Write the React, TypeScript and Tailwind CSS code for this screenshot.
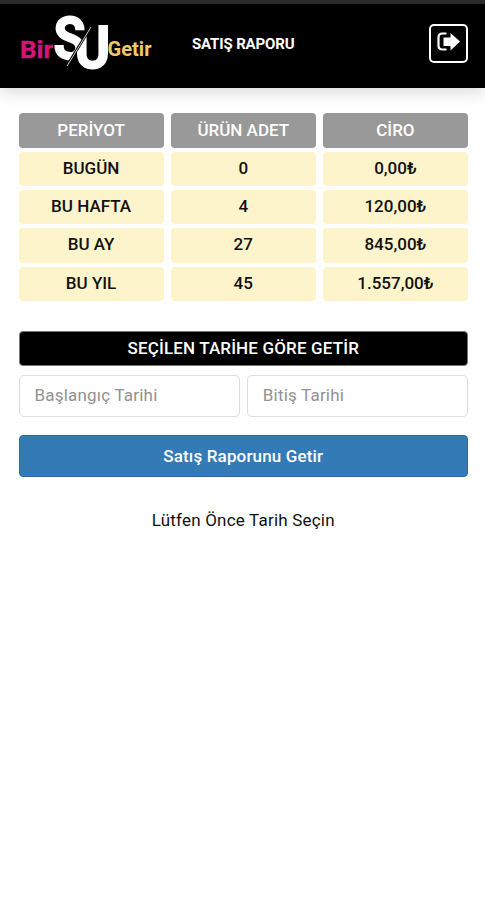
import React from "react";

const columns = ["PERİYOT", "ÜRÜN ADET", "CİRO"];

const rows = [
  { period: "BUGÜN", count: "0", revenue: "0,00₺" },
  { period: "BU HAFTA", count: "4", revenue: "120,00₺" },
  { period: "BU AY", count: "27", revenue: "845,00₺" },
  { period: "BU YIL", count: "45", revenue: "1.557,00₺" },
];

const Logo = () => (
  <svg className="mt-[-8px]" width="136" height="60" viewBox="18 12 136 60" fontFamily="Roboto, sans-serif" fontWeight="700">
    {/* Each big letter only shows on its own side of the slash */}
    <clipPath id="left-of-slash">
      <path d="M40 10H101.4L62.6 73H40Z" />
    </clipPath>
    <clipPath id="right-of-slash">
      <path d="M101.4 10H125V73H62.6Z" />
    </clipPath>
    <text x="20" y="58" fontSize="23.5" fill="#d3147b" stroke="#d3147b" strokeWidth="0.4" textLength="33" lengthAdjust="spacingAndGlyphs">Bir</text>
    <g clipPath="url(#left-of-slash)">
      <text x="53.5" y="58.5" fontSize="59" fontWeight="700" fill="#ffffff" stroke="#ffffff" strokeWidth="1.8" textLength="32" lengthAdjust="spacingAndGlyphs">S</text>
    </g>
    <g clipPath="url(#right-of-slash)">
      <text x="74.8" y="67.5" fontSize="59" fontWeight="700" fill="#ffffff" stroke="#ffffff" strokeWidth="1.8" textLength="35.5" lengthAdjust="spacingAndGlyphs">U</text>
    </g>
    <path d="M89 30L69 62.5" stroke="#000000" strokeWidth="2.6" />
    <path d="M91 27L67 66" stroke="#ffffff" strokeWidth="0.8" />
    <text x="107.5" y="56" fontSize="19.5" fill="#f5c869" textLength="44" lengthAdjust="spacingAndGlyphs">Getir</text>
  </svg>
);

const Header = () => (
  <header className="flex h-[88px] items-center border-t-4 border-[#2b2b2b] bg-black pl-[18px] pr-[17px] shadow-[0_3px_16px_rgba(0,0,0,0.17)]">
    <Logo />
    <h1 className="ml-[38px] mt-[-3px] text-[15px] font-bold tracking-[-0.15px] text-white">SATIŞ RAPORU</h1>
    <button aria-label="Çıkış" className="ml-auto mt-[-6px] flex h-[39px] w-[39px] items-center justify-center rounded-[5px] border-2 border-white">
      <svg className="mt-[-2px]" width="25" height="22" viewBox="0 0 25 22" fill="none">
        <path d="M10.5 2.5H6.5Q2.5 2.5 2.5 6.5V14.5Q2.5 18.5 6.5 18.5H10.5" stroke="#ffffff" strokeWidth="2.2" />
        <path d="M7.5 6.5H14.5V2L24 10.5L14.5 19.5V15H7.5Z" fill="#ffffff" />
      </svg>
    </button>
  </header>
);

export default function App() {
  return (
    <div className="min-h-[900px] w-full bg-white font-['Roboto','Noto_Sans',sans-serif] text-[17px] font-medium text-[#111111]">
      <Header />

      <main className="pl-[18.5px] pr-[17px] pt-[25px]">
        <div className="flex flex-col gap-1 text-center">
          <div className="grid grid-cols-3 gap-[7px]">
            {columns.map((title) => (
              <div key={title} className="h-[35px] rounded-[4px] bg-[#999999] leading-[35px] text-white">
                {title}
              </div>
            ))}
          </div>
          {rows.map((row) => (
            <div key={row.period} className="grid h-[34.2px] grid-cols-3 gap-[7px] leading-[32px]">
              <div className="rounded-[4px] bg-[#fef4cb]">{row.period}</div>
              <div className="rounded-[4px] bg-[#fef4cb]">{row.count}</div>
              <div className="rounded-[4px] bg-[#fef4cb]">{row.revenue}</div>
            </div>
          ))}
        </div>

        <h2 className="mt-[30px] h-[35px] rounded-[4px] border border-[#777777] bg-black text-center leading-[33px] tracking-[0.15px] text-white">
          SEÇİLEN TARİHE GÖRE GETİR
        </h2>

        <div className="mt-[9px] grid grid-cols-2 gap-[7px]">
          <input
            placeholder="Başlangıç Tarihi"
            className="h-[42px] w-full min-w-0 rounded-[5px] border border-[#dddddd] px-[15px] pb-0.5 font-normal tracking-[0.2px] placeholder:text-[#929292]"
          />
          <input
            placeholder="Bitiş Tarihi"
            className="h-[42px] w-full min-w-0 rounded-[5px] border border-[#dddddd] px-[15px] pb-0.5 font-normal tracking-[0.2px] placeholder:text-[#929292]"
          />
        </div>

        <button className="mt-[18px] h-[42px] w-full rounded-[4px] border border-[#2e6da4] bg-[#337ab7] pt-0.5 tracking-[0.15px] text-white">
          Satış Raporunu Getir
        </button>

        <p className="mt-[31px] text-center font-normal tracking-[0.2px]">Lütfen Önce Tarih Seçin</p>
      </main>
    </div>
  );
}
